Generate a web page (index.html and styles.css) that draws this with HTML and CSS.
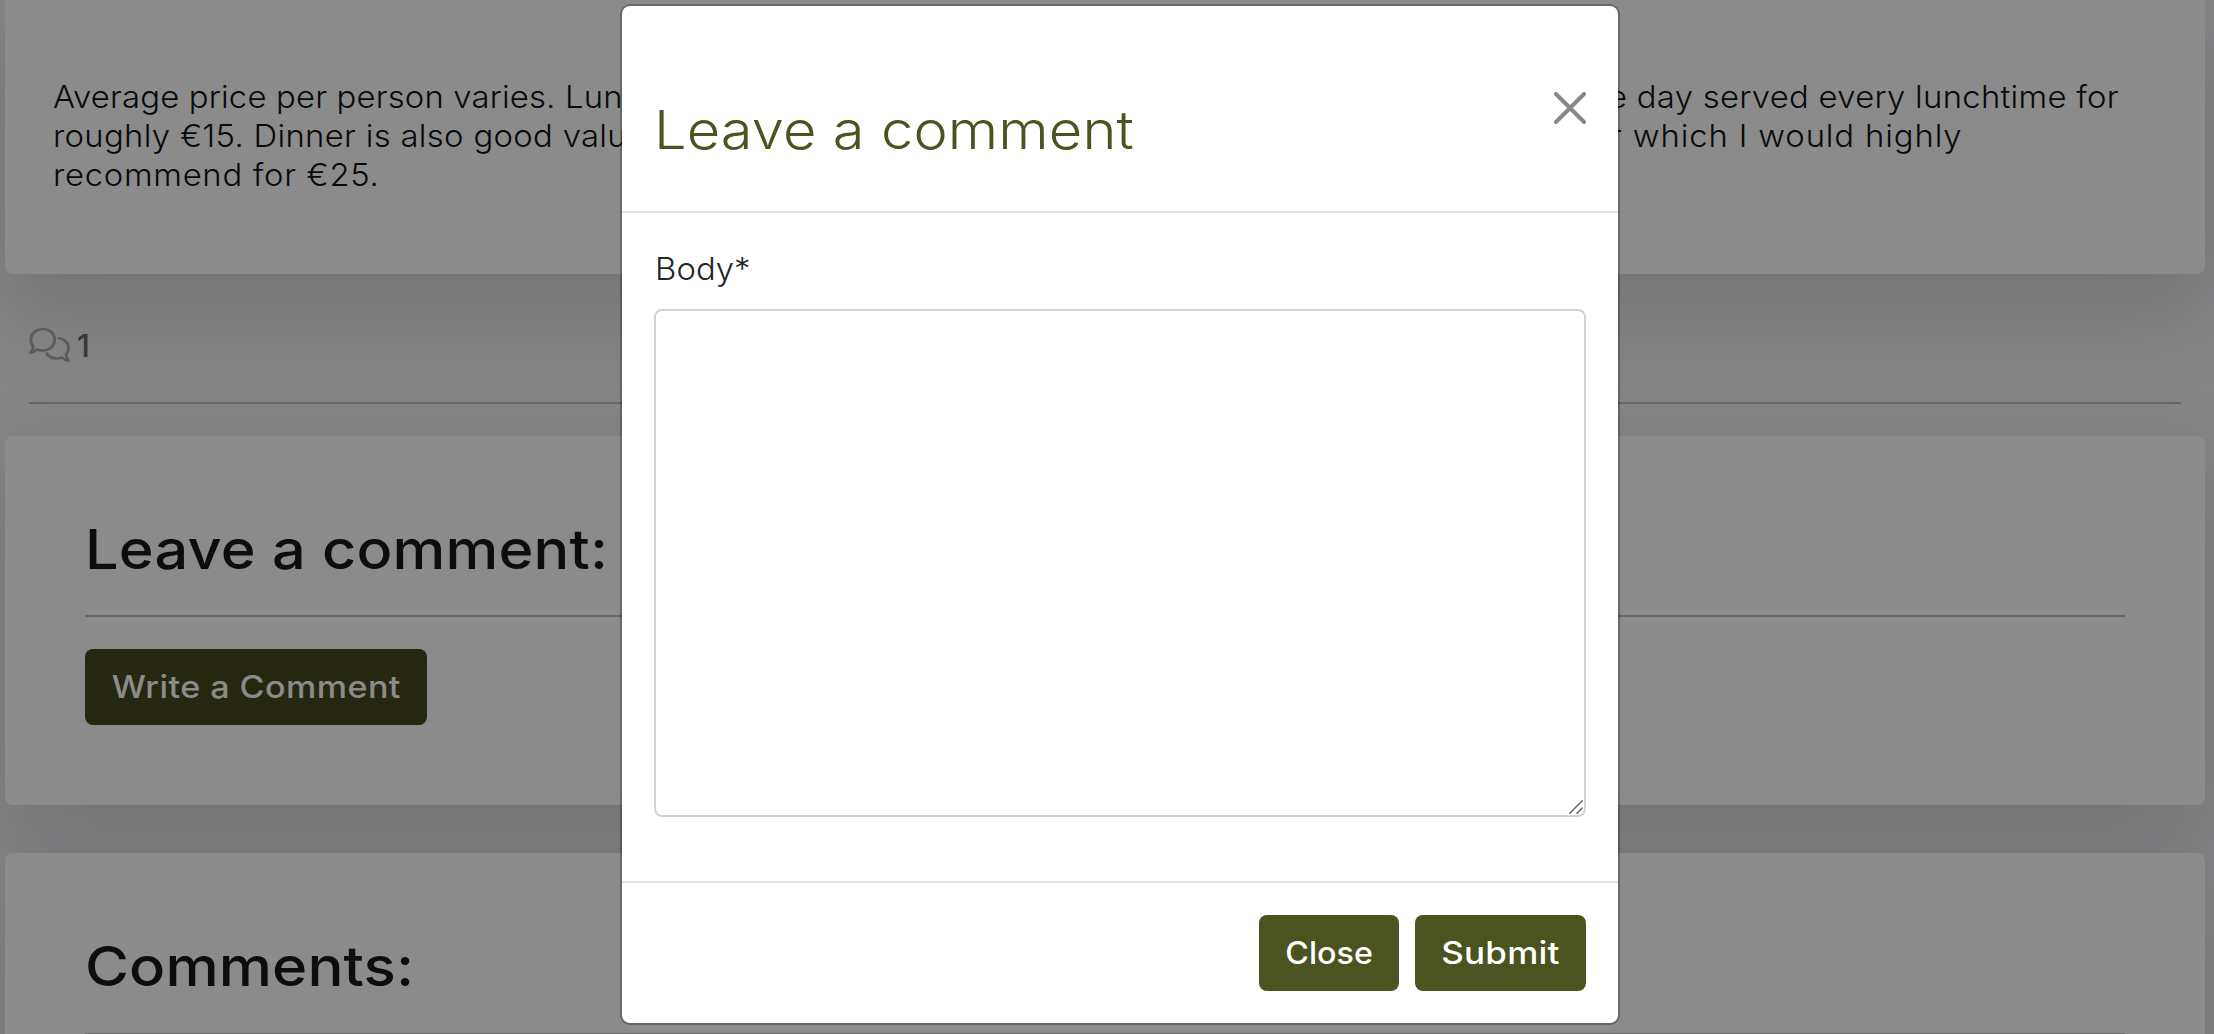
FILE: index.html
```html
<!DOCTYPE html>
<html lang="en">
<head>
<meta charset="utf-8">
<title>Leave a comment</title>
<link rel="stylesheet" href="styles.css">
</head>
<body>
<main class="page">
  <section class="card review">
    <div class="line"><span class="l1">Average price per person varies. Lun</span><span class="r1">e day served every lunchtime for</span></div>
    <div class="line"><span class="l2">roughly €15. Dinner is also good valu</span><span class="r2">r which I would highly</span></div>
    <div class="line"><span class="l3">recommend for €25.</span></div>
  </section>

  <div class="stats">
    <div class="count">
      <svg class="bubbles" viewBox="0 0 42 40" fill="none" stroke="currentColor" stroke-width="3" stroke-linecap="round" stroke-linejoin="round" preserveAspectRatio="none">
        <path d="M14.5 2.2C21.5 2.2 26.3 7.6 26.3 14.2S21 26.2 14.2 26.2c-2.2 0-4.2-.5-6-1.300C6.300 26.800 4 28.200 1.600 28.500 3 26.600 4.100 24.300 4.300 21.800 2.600 19.700 1.700 17 1.700 14.200 1.700 7.600 7.300 2.200 14.500 2.200Z"/>
        <path d="M30.500 12.500C36.500 13.200 40.500 17.800 40.500 23.300c0 2.900-1 5.200-2.600 7.300.2 2.500 1.100 4.900 2.500 6.700-2.500-.3-4.700-1.400-6.600-3.300-1.700.7-3.600 1.100-5.600 1-4.200-.2-7.900-2.200-9.900-5.300"/>
      </svg>
      <span>1</span>
    </div>
    <hr class="rule">
  </div>

  <section class="card write">
    <h2 class="heading lead">Leave a comment:</h2>
    <hr class="rule">
    <button class="btn btn-write"><span>Write a Comment</span></button>
  </section>

  <section class="card comments">
    <h2 class="heading list">Comments:</h2>
    <hr class="rule">
  </section>
</main>

<div class="backdrop"></div>

<div class="modal" role="dialog">
  <header class="modal-header">
    <h5 class="modal-title">Leave a comment</h5>
    <svg class="close" viewBox="0 0 32 32" stroke="currentColor" stroke-width="4" stroke-linecap="round"><path d="M2 2 30 30M30 2 2 30"/></svg>
  </header>
  <div class="modal-body">
    <label class="label" for="body">Body*</label>
    <div class="field">
      <textarea id="body" class="textarea"></textarea>
      <svg class="grip" viewBox="0 0 14 14" stroke="currentColor" stroke-width="1.500" stroke-linecap="round"><path d="M.8 13.200 13.200.8M8 13.200 13.200 8"/></svg>
    </div>
  </div>
  <footer class="modal-footer">
    <button class="btn btn-close"><span>Close</span></button>
    <button class="btn btn-submit"><span>Submit</span></button>
  </footer>
</div>
</body>
</html>
```
FILE: styles.css
```css
* { box-sizing: border-box; }

body {
  margin: 0;
  height: 1034px;
  overflow: hidden;
  background: #f3f4f6;
  color: #212529;
  font: 300 31px/39px Inter, "Open Sans", sans-serif;
}

h2, h5, hr { margin: 0; }

.page {
  display: flex;
  flex-direction: column;
  height: 1034px;
  overflow: hidden;
  padding: 0 9px 0 5px;
}

.card {
  flex: none;
  background: #fff;
  border-radius: 8px;
  box-shadow: 0 32px 96px rgba(0, 0, 0, .15);
}

.review {
  height: 274px;
  padding: 77px 48px 0;
  border-radius: 0 0 8px 8px;
  color: #111;
}

/* Slightly extended letterforms */
.line span,
.heading,
.modal-title,
.label {
  transform: scaleX(1.06);
  transform-origin: left;
}

.line {
  display: flex;
  white-space: nowrap;
}
.line > :first-child { flex: none; width: 1555px; }
.l1 { letter-spacing: .15px; }
.l2 { letter-spacing: .28px; }
.l3 { letter-spacing: .65px; }
.r1 { letter-spacing: .25px; }
.r2 { letter-spacing: .8px; padding-left: 2px; }

.stats {
  flex: none;
  height: 162px;
  padding: 52px 24px 0;
}

.count {
  display: flex;
  align-items: center;
  gap: 7px;
  height: 39px;
  margin-bottom: 37px;
  font-weight: 500;
  color: #666;
}
.bubbles { width: 41px; height: 36px; margin-bottom: 2px; color: #aaa; }

.rule {
  height: 2px;
  border: 0;
  background: #bfbfbf;
}

.write {
  height: 369px;
  margin-bottom: 48px;
  padding: 80px 80px 0;
}
.heading {
  margin-bottom: 32px;
  color: #16191c;
  font-size: 55px;
  line-height: 67px;
  font-weight: 550;
  white-space: nowrap;
}
.lead { letter-spacing: .2px; transform: scaleX(1.08); }
.list { letter-spacing: .1px; transform: scaleX(1.09); margin-bottom: 33px; }

.comments {
  height: 300px;
  padding: 80px 80px 0;
}

.btn {
  height: 76px;
  padding: 0;
  border: 0;
  border-radius: 8px;
  background: #4b5320;
  color: #fff;
  font: 550 31px/76px Inter, "Open Sans", sans-serif;
  white-space: nowrap;
}
.btn span { display: inline-block; }
.btn-write {
  width: 342px;
  margin-top: 32px;
  background: #46491c;
}
.btn-write span { transform: scaleX(1.1); letter-spacing: .4px; }
.btn-close { width: 140px; }
.btn-close span { transform: scaleX(1.04); }
.btn-submit { width: 171px; }
.btn-submit span { transform: scaleX(1.13); letter-spacing: .2px; }

.backdrop {
  position: absolute;
  inset: 0;
  background: rgba(0, 0, 0, .455);
}

.modal {
  position: absolute;
  left: 620px;
  top: 4px;
  display: flex;
  flex-direction: column;
  width: 1000px;
  height: 1021px;
  border: 2px solid rgba(0, 0, 0, .25);
  border-radius: 10px;
  background: #fff;
  background-clip: padding-box;
}

.modal-header {
  display: flex;
  justify-content: space-between;
  height: 207px;
  padding: 86px 32px 0;
  border-bottom: 2px solid #dee2e6;
}
.modal-title {
  color: #4b5320;
  font-size: 53px;
  line-height: 76px;
  font-weight: 340;
  letter-spacing: .1px;
  transform: scaleX(1.09);
}
.close { width: 32px; height: 32px; color: #888; }

.modal-body {
  flex: 1;
  padding: 36px 32px 0;
}
.label {
  display: block;
  margin-bottom: 21px;
  padding-left: 1px;
}
.field { position: relative; }
.textarea {
  display: block;
  width: 100%;
  height: 508px;
  border: 2px solid #ced4da;
  border-radius: 8px;
  background: #fff;
  resize: none;
}
.grip {
  position: absolute;
  right: 3px;
  bottom: 3px;
  width: 14px;
  height: 14px;
  color: #666;
}

.modal-footer {
  display: flex;
  justify-content: flex-end;
  gap: 16px;
  height: 142px;
  padding: 32px 32px 0;
  border-top: 2px solid #dee2e6;
}
```
